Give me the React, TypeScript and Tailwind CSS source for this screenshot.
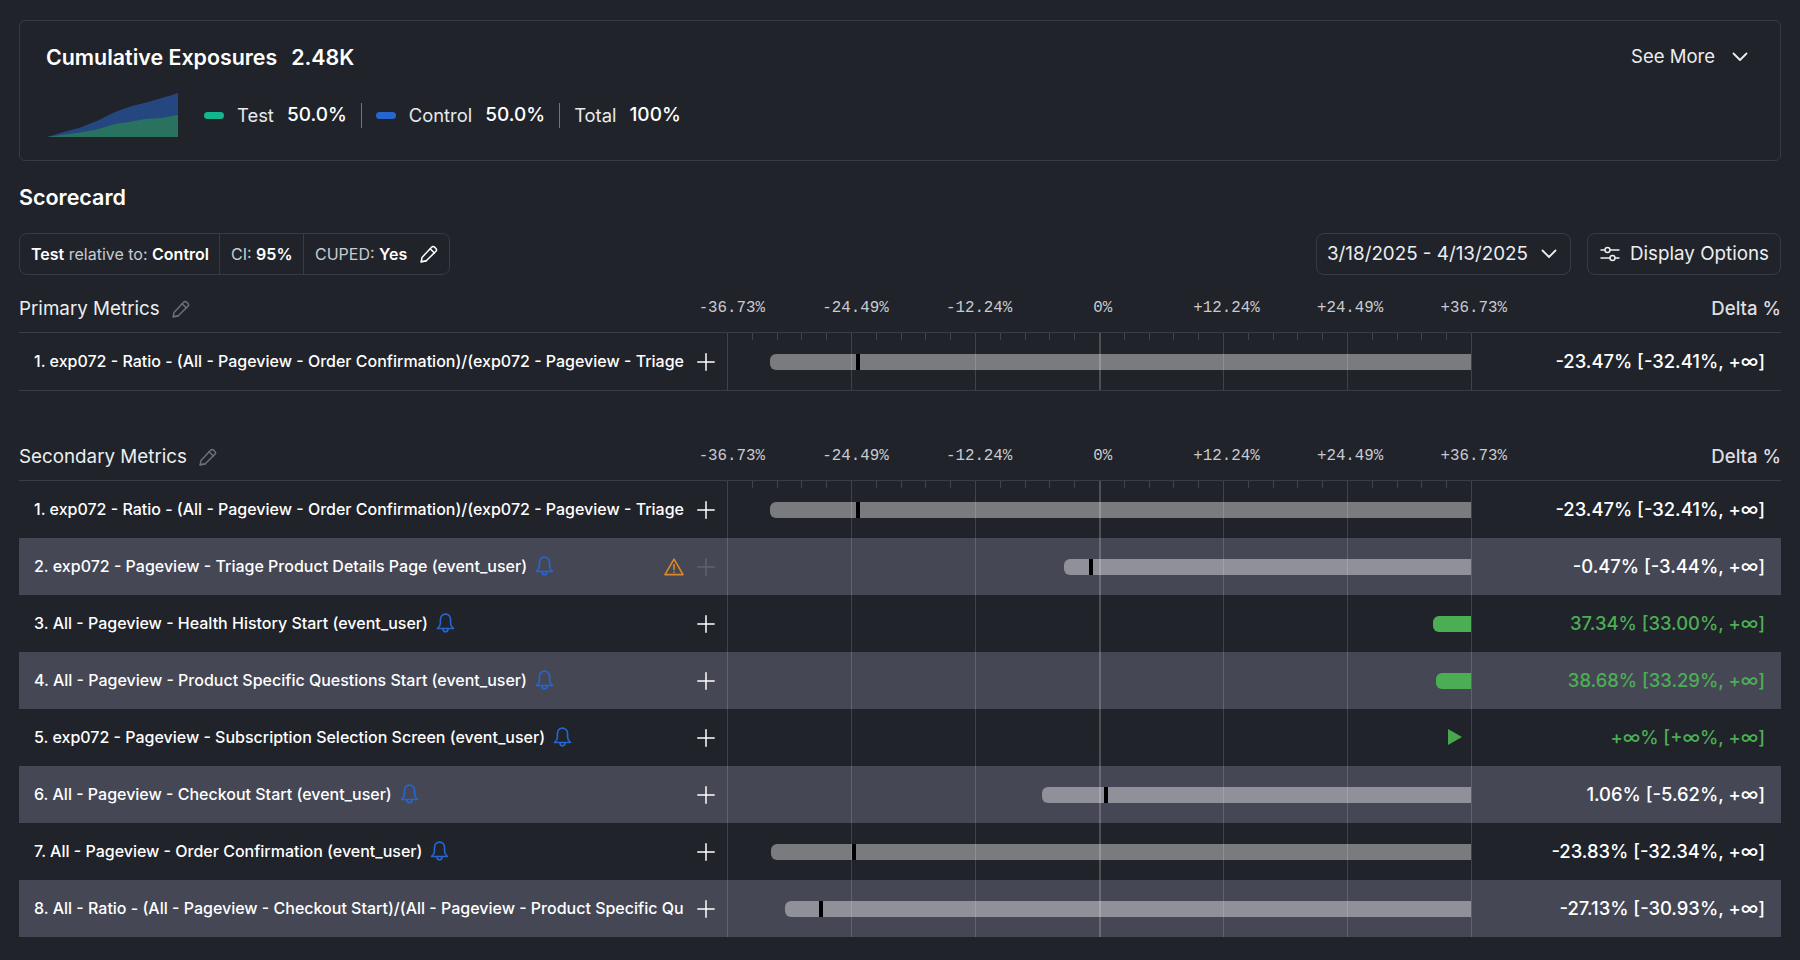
import React from 'react'

type Metric = {
  label: string
  delta: string
  start?: number
  mark?: number
  tone?: 'gray' | 'green' | 'arrow'
  bell?: boolean
  warn?: boolean
}

const axis = ['-36.73%', '-24.49%', '-12.24%', '0%', '+12.24%', '+24.49%', '+36.73%']
const grid = [0, 124, 248, 372, 496, 620, 744]
const ticks = Array.from({ length: 30 }, (_, i) => i * 24.8).filter((_, i) => i % 5 !== 0)

const ratioRow: Metric = {
  label: '1. exp072 - Ratio - (All - Pageview - Order Confirmation)/(exp072 - Pageview - Triage',
  delta: '-23.47% [-32.41%, +∞]',
  start: 43,
  mark: 129,
  tone: 'gray',
}

const secondary: Metric[] = [
  ratioRow,
  { label: '2. exp072 - Pageview - Triage Product Details Page (event_user)', delta: '-0.47% [-3.44%, +∞]', start: 337, mark: 362, tone: 'gray', bell: true, warn: true },
  { label: '3. All - Pageview - Health History Start (event_user)', delta: '37.34% [33.00%, +∞]', start: 706, tone: 'green', bell: true },
  { label: '4. All - Pageview - Product Specific Questions Start (event_user)', delta: '38.68% [33.29%, +∞]', start: 709, tone: 'green', bell: true },
  { label: '5. exp072 - Pageview - Subscription Selection Screen (event_user)', delta: '+∞% [+∞%, +∞]', tone: 'arrow', bell: true },
  { label: '6. All - Pageview - Checkout Start (event_user)', delta: '1.06% [-5.62%, +∞]', start: 315, mark: 377, tone: 'gray', bell: true },
  { label: '7. All - Pageview - Order Confirmation (event_user)', delta: '-23.83% [-32.34%, +∞]', start: 44, mark: 125, tone: 'gray', bell: true },
  { label: '8. All - Ratio - (All - Pageview - Checkout Start)/(All - Pageview - Product Specific Qu', delta: '-27.13% [-30.93%, +∞]', start: 58, mark: 92, tone: 'gray' },
]

const Chevron = () => (
  <svg width="16" height="10" viewBox="0 0 16 10" fill="none" stroke="currentColor" strokeWidth="1.8" strokeLinecap="round" strokeLinejoin="round">
    <path d="M1.5 1.5 8 8l6.5-6.5" />
  </svg>
)

const Pencil = ({ className = '' }: { className?: string }) => (
  <svg className={className} width="18" height="18" viewBox="0 0 18 18" fill="none" stroke="currentColor" strokeWidth="1.5" strokeLinejoin="round" strokeLinecap="round">
    <path d="M1.2 16.8 2 12.4 11.6 2.2a2 2 0 0 1 2.9-.1l1.4 1.4a2 2 0 0 1 0 2.8L6 16z" />
    <path d="M1.2 16.8 6 16M10.2 3.8l4.2 4.2" />
  </svg>
)

const Bell = () => (
  <svg className="shrink-0 text-[#2566d0]" width="19" height="21" viewBox="0 0 17 19" fill="none" stroke="currentColor" strokeWidth="1.5" strokeLinejoin="round" strokeLinecap="round">
    <path d="M8.5 1C5.6 1 3.9 3.2 3.9 6v3.2c0 2-1 3.5-2.6 4.8h14.4c-1.6-1.3-2.6-2.8-2.6-4.8V6c0-2.8-1.7-5-4.6-5z" />
    <path d="M6.3 14.2c0 1.5 1 2.8 2.2 2.8s2.2-1.3 2.2-2.8" />
  </svg>
)

const Warning = () => (
  <svg className="ml-auto shrink-0 text-[#d98a2c]" width="20" height="18" viewBox="0 0 20 18" fill="none" stroke="currentColor" strokeWidth="1.6" strokeLinejoin="round" strokeLinecap="round">
    <path d="M10 1.2 1 16.6h18z" />
    <path d="M10 6.6v5M10 14v.2" />
  </svg>
)

const Plus = ({ dim }: { dim?: boolean }) => (
  <svg className={dim ? 'shrink-0 text-white/15' : 'shrink-0 text-white'} width="18" height="18" viewBox="0 0 18 18" fill="none" stroke="currentColor" strokeWidth="1.5" strokeLinecap="round">
    <path d="M9 .8v16.4M.8 9h16.4" />
  </svg>
)

const Sparkline = () => (
  <svg className="ml-px" width="132" height="45" viewBox="0 0 132 45">
    <path fill="#24477f" d="M0 44 10 41 20 38 32 35 42 31 52 27 60 23 68 19 76 16 85 13 97 10 108 7 118 4 125 2 131 0V44H0z" />
    <path fill="#2a7260" d="M0 44 14 42 30 40 48 37 58 34 68 31 82 29 98 26 114 25 125 23 131 22V44H0z" />
  </svg>
)

const Legend = ({ color, name, value }: { color?: string; name: string; value: string }) => (
  <div className="flex items-center text-[18.4px] text-white">
    {color && <span className={`mr-[13px] h-[7px] w-5 rounded-full ${color}`} />}
    <span className="text-[#e8e9ec]">{name}</span>
    <span className="ml-[13px] text-[19px] font-medium">{value}</span>
  </div>
)

const Header = ({ title }: { title: string }) => (
  <div className="flex h-[47px] items-center border-b border-[#3a3d45]">
    <div className="flex w-[651px] shrink-0 items-center gap-3 text-[18.8px] text-[#eceef0]">
      {title}
      <Pencil className="text-[#6d7077]" />
    </div>
    <div className="flex font-['Liberation_Mono',monospace] text-[15.8px] text-[#c9cbd0]">
      {axis.map((a) => (
        <span key={a} className="w-[123.67px] text-center">{a}</span>
      ))}
    </div>
    <span className="flex-1 text-right text-[18.6px] font-medium text-[#dcdee2]">Delta %</span>
  </div>
)

const Row = ({ metric, stripe, showTicks }: { metric: Metric; stripe?: boolean; showTicks?: boolean }) => (
  <div className={`flex h-[57px] items-stretch ${stripe ? 'bg-[#454755]' : ''}`}>
    <div className="flex w-[708px] shrink-0 items-center pl-[15px] pr-3">
      <div className="flex w-[650px] items-center gap-2 overflow-hidden text-[16px] font-medium text-white">
        <span className="min-w-0 whitespace-nowrap pb-0.5">{metric.label}</span>
        {metric.bell && <Bell />}
        {metric.warn && <Warning />}
      </div>
      <span className="ml-[13px]"><Plus dim={metric.warn} /></span>
    </div>
    <div className="relative w-[745px] shrink-0">
      {metric.start !== undefined && (
        <div
          className={`absolute right-px top-1/2 h-4 -translate-y-1/2 rounded-l-md ${metric.tone === 'green' ? 'bg-[#4cae54]' : 'bg-white/40'}`}
          style={{ left: metric.start }}
        />
      )}
      {metric.mark !== undefined && (
        <div className="absolute top-1/2 h-4 w-1 -translate-y-1/2 bg-black" style={{ left: metric.mark }} />
      )}
      {metric.tone === 'arrow' && (
        <svg className="absolute left-[721px] top-[20px]" width="14" height="16" viewBox="0 0 14 16">
          <path fill="#47a64e" d="M0 0 14 8 0 16z" />
        </svg>
      )}
      {grid.map((x) => (
        <div
          key={x}
          className={`absolute inset-y-0 ${x === 372 ? 'w-0.5 bg-white/20' : 'w-px bg-white/15'}`}
          style={{ left: x }}
        />
      ))}
      {showTicks && ticks.map((x) => (
        <div key={x} className="absolute top-0 h-[7px] w-px bg-white/15" style={{ left: x }} />
      ))}
    </div>
    <div
      className={`flex flex-1 items-center justify-end pr-4 text-[18.4px] font-medium ${metric.tone === 'gray' ? 'text-white' : 'text-[#4cae54]'}`}
    >
      {metric.delta}
    </div>
  </div>
)

const App = () => {
  return (
    <div className="h-[960px] overflow-hidden bg-[#20232a] pl-[19px] pr-[19px] pt-5 font-['Inter',sans-serif] text-white">
      <div className="flex h-[141px] flex-col rounded-md border border-[#383b44] px-[26px] pt-[22px]">
        <div className="flex h-7 items-center justify-between">
          <div className="flex items-center gap-[14px] text-[21.4px] font-semibold">
            <span>Cumulative Exposures</span>
            <span>2.48K</span>
          </div>
          <div className="mr-[6px] flex items-center gap-[17px] text-[18.5px] text-[#eceef0]">
            See More
            <Chevron />
          </div>
        </div>
        <div className="mt-[22px] flex items-center">
          <Sparkline />
          <div className="ml-[25px] flex items-center">
            <Legend color="bg-[#12b78f]" name="Test" value="50.0%" />
            <div className="mx-[14px] h-[25px] w-px bg-[#70737a]" />
            <Legend color="bg-[#2566d0]" name="Control" value="50.0%" />
            <div className="mx-[14px] h-[25px] w-px bg-[#70737a]" />
            <Legend name="Total" value="100%" />
          </div>
        </div>
      </div>

      <h2 className="mt-[22px] h-7 text-[21.5px] font-semibold leading-7">Scorecard</h2>

      <div className="mt-[22px] flex h-[42px] items-center justify-between">
        <div className="flex h-full w-[431px] items-center rounded-lg border border-[#383b44] text-[16px] text-[#c9cbd0]">
          <div className="flex h-full w-[200px] items-center border-r border-[#383b44] pl-[11px]">
            <span><b className="font-semibold text-white">Test</b> relative to: <b className="font-semibold text-white">Control</b></span>
          </div>
          <div className="flex h-full w-[84px] items-center border-r border-[#383b44] pl-[11px]">
            <span>CI: <b className="font-semibold text-white">95%</b></span>
          </div>
          <div className="flex items-center gap-[13px] pl-[11px]">
            <span>CUPED: <b className="font-semibold text-white">Yes</b></span>
            <Pencil className="text-white" />
          </div>
        </div>
        <div className="flex h-full items-center gap-4 text-[18.8px] text-[#eceef0]">
          <div className="flex h-full w-[255px] items-center gap-[13px] rounded-lg border border-[#383b44] pl-[10px]">
            3/18/2025 - 4/13/2025
            <Chevron />
          </div>
          <div className="flex h-full w-[194px] items-center gap-[10px] rounded-lg border border-[#383b44] pl-[12px]">
            <svg width="20" height="18" viewBox="0 0 20 18" fill="none" stroke="currentColor" strokeWidth="1.4" strokeLinecap="round">
              <path d="M1 5h4M10 5h9M1 13h9M15 13h4" />
              <circle cx="7.5" cy="5" r="2.5" />
              <circle cx="12.5" cy="13" r="2.5" />
            </svg>
            Display Options
          </div>
        </div>
      </div>

      <div className="mt-[11px]">
        <Header title="Primary Metrics" />
        <div className="border-b border-[#3a3d45]">
          <Row metric={ratioRow} showTicks />
        </div>
      </div>

      <div className="mt-[43px]">
        <Header title="Secondary Metrics" />
        {secondary.map((m, i) => (
          <Row key={m.label} metric={m} stripe={i % 2 === 1} showTicks={i === 0} />
        ))}
      </div>
    </div>
  )
}

export default App
